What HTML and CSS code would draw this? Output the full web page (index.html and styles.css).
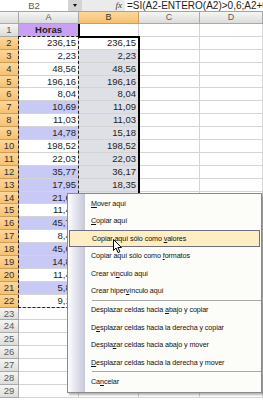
FILE: index.html
```html
<!DOCTYPE html>
<html lang="es">
<head>
    <meta charset="UTF-8">
    <title>Libro1 - Copiar aquí</title>
    <link rel="stylesheet" href="styles.css">
</head>
<body>
    <div class="ventana">
        <div class="barra-formulas">
            <div class="cuadro-nombre">B2</div>
            <div class="boton-nombre"><span class="flecha"></span></div>
            <div class="fx">fx</div>
            <div class="formula">=SI(A2-ENTERO(A2)&gt;0,6;A2+0,4;A2)</div>
        </div>

        <div class="hoja">
            <div class="celdas" id="celdas"></div>
            <div class="marcas">
                <div class="marquesina"></div>
                <div class="borde-b1"></div>
                <div class="seleccion"></div>
            </div>
        </div>

        <div class="menu">
            <div class="item"><u>M</u>over aquí</div>
            <div class="item"><u>C</u>opiar aquí</div>
            <div class="item activo">Copiar aquí sólo como <u>v</u>alores</div>
            <div class="item">Copiar aquí sólo como <u>f</u>ormatos</div>
            <div class="item">Crear ví<u>n</u>culo aquí</div>
            <div class="item">Crear hiper<u>v</u>ínculo aquí</div>
            <div class="sep"></div>
            <div class="item">Desplazar celdas hacia <u>a</u>bajo y copiar</div>
            <div class="item">D<u>e</u>splazar celdas hacia la derecha y copiar</div>
            <div class="item">Despla<u>z</u>ar celdas hacia abajo y mover</div>
            <div class="item"><u>D</u>esplazar celdas hacia la derecha y mover</div>
            <div class="sep"></div>
            <div class="item">Ca<u>n</u>celar</div>
        </div>

        <svg class="cursor" width="10" height="15" viewBox="0 0 10 15">
            <path d="M0.5 0.5 V11.5 L3 9 L5 13.6 L6.9 12.8 L4.9 8.5 H8.4 Z" fill="#fff" stroke="#000" stroke-width="1"/>
        </svg>
    </div>

    <script>
        const colA = ["236,15","2,23","48,56","196,16","8,04","10,69","11,03","14,78","198,52","22,03","35,77","17,95","21,65","11,43","45,72","8,44","45,61","14,88","11,49","5,83","9,12"];
        const colB = ["236,15","2,23","48,56","196,16","8,04","11,09","11,03","15,18","198,52","22,03","36,17","18,35","22,05","11,43","46,12","8,44","46,01","15,28","11,49","6,23","9,12"];
        const lila = [7, 9, 12, 13, 14, 16, 18, 19, 21];
        const celdas = document.getElementById("celdas");

        function celda(clase, texto) {
            const d = document.createElement("div");
            d.className = clase;
            d.textContent = texto || "";
            celdas.appendChild(d);
        }

        celda("cab esquina");
        celda("cab", "A");
        celda("cab activa", "B");
        celda("cab", "C");
        celda("cab", "D");

        for (let r = 1; r <= 29; r++) {
            const enRango = r >= 2 && r <= 22;
            celda(enRango ? "cab fila activa" : "cab fila", r);
            if (r == 1) {
                celda("c horas", "Horas");
                celda("c");
            } else if (enRango) {
                celda(lila.includes(r) ? "c lila" : "c", colA[r - 2]);
                celda(r == 2 ? "c" : "c gris", colB[r - 2]);
            } else {
                celda("c");
                celda("c");
            }
            celda("c");
            celda("c");
        }
    </script>
</body>
</html>
```

FILE: styles.css
```css
body {
    margin: 0;
    background: #fff;
}
.ventana {
    position: relative;
    width: 263px;
    height: 400px;
    overflow: hidden;
    font-family: "Liberation Sans", Arial, sans-serif;
    color: #1e1e1e;
}

/* barra de formulas */
.barra-formulas {
    display: flex;
    height: 12px;
    box-sizing: border-box;
    border-bottom: 1px solid #a4a4a4;
    background: #ebebeb;
}
.cuadro-nombre {
    width: 68px;
    background: #fff;
    text-align: center;
    font-size: 9.5px;
    line-height: 11px;
    color: #5a5a5a;
}
.boton-nombre {
    width: 14px;
    background: #d4d4d4;
    display: flex;
    align-items: center;
    justify-content: center;
}
.flecha {
    border-left: 2.5px solid transparent;
    border-right: 2.5px solid transparent;
    border-top: 3px solid #111;
}
.fx {
    width: 43px;
    box-sizing: border-box;
    text-align: right;
    padding-right: 3px;
    font: italic 9px "Liberation Serif", serif;
    line-height: 11px;
    color: #333;
}
.formula {
    flex: 1;
    background: #fff;
    padding-left: 2px;
    font-size: 10px;
    line-height: 11px;
    white-space: nowrap;
    overflow: hidden;
}

/* hoja */
.hoja {
    position: relative;
}
.celdas,
.marcas {
    display: grid;
    grid-template-columns: 19px 60px 60px 61px 63px;
    grid-template-rows: 12px;
    grid-auto-rows: 12.9px;
}
.marcas {
    position: absolute;
    inset: 0;
    pointer-events: none;
}
.cab {
    box-sizing: border-box;
    background: linear-gradient(#f5f5f3, #dcdcda);
    border-right: 1px solid #a9a9a9;
    border-bottom: 1px solid #a9a9a9;
    text-align: center;
    font-size: 9px;
    line-height: 11px;
    color: #5c5c5c;
}
.cab.fila {
    line-height: 12px;
    font-size: 9.5px;
}
.cab.activa {
    background: linear-gradient(#fcd79c, #f6c171);
    border-color: #d29c55;
    color: #333;
}
.c {
    box-sizing: border-box;
    border-right: 1px solid #d4d4d4;
    border-bottom: 1px solid #d4d4d4;
    text-align: right;
    padding-right: 2px;
    font-size: 9.5px;
    line-height: 12.5px;
    white-space: nowrap;
    overflow: hidden;
}
.horas {
    background: #c9a0f4;
    text-align: center;
    font-weight: bold;
    padding-right: 0;
}
.lila {
    background: #c9c9f6;
}
.gris {
    background: #dfdfe6;
}

/* marquesina de copia y seleccion */
.marquesina {
    grid-area: 3 / 2 / 24 / 3;
    border: 1px dashed #222;
    margin: -1px 0 0 -1px;
}
.borde-b1 {
    grid-area: 2 / 3 / 3 / 4;
    border-left: 2px solid #000;
    margin-left: -1px;
}
.seleccion {
    grid-area: 3 / 3 / 24 / 4;
    border-top: 2px solid #000;
    border-right: 2px solid #000;
    margin: -1px -1px 0 0;
}

/* menu contextual */
.menu {
    position: absolute;
    left: 67px;
    top: 193px;
    width: 195px;
    box-sizing: border-box;
    border: 1px solid #8a8a8a;
    padding: 1px 0 2px 0;
    background: linear-gradient(to right, #fdfdff, #c6c7da 17px, #fcfcf9 17px);
    box-shadow: 2px 2px 2px rgba(0, 0, 0, 0.3);
    font-size: 7.2px;
    letter-spacing: -0.1px;
    color: #111;
}
.item {
    height: 17.4px;
    line-height: 17.4px;
    padding-left: 23px;
    white-space: nowrap;
    box-sizing: border-box;
}
.item.activo {
    background: #ffeec2;
    border: 1px solid #6f6f80;
    line-height: 15.4px;
    padding-left: 22px;
    margin: 0 1px;
}
.sep {
    height: 1px;
    background: #a8a8a8;
    margin: 0.5px 0 0.5px 24px;
}
.cursor {
    position: absolute;
    left: 113px;
    top: 239px;
}
```
